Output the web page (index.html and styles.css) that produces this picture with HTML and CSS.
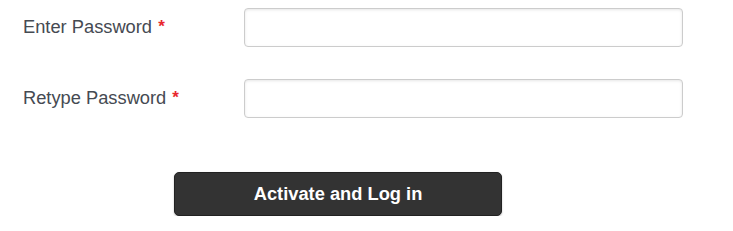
FILE: index.html
```html
<!DOCTYPE html>
<html lang="en">
<head>
    <meta charset="UTF-8">
    <meta name="viewport" content="width=device-width, initial-scale=1.0">
    <title>Activate account</title>
    <link rel="stylesheet" href="styles.css">
</head>
<body>

<form class="activate-form">
    <div class="form-row">
        <label class="form-label" for="password">Enter Password <span class="required">*</span></label>
        <input class="form-input" id="password" type="password">
    </div>

    <div class="form-row">
        <label class="form-label" for="password2">Retype Password <span class="required">*</span></label>
        <input class="form-input" id="password2" type="password">
    </div>

    <div class="form-actions">
        <button class="button" type="submit">Activate and Log in</button>
    </div>
</form>

</body>
</html>
```

FILE: styles.css
```css
/* Design général */
body {
    font-family: 'Liberation Sans', Arial, sans-serif;
    background: #fff;
    color: #444;
    margin: 0;
    padding: 0;
}

.activate-form {
    padding: 8px 0 0 23px;
}

.form-row {
    display: grid;
    grid-template-columns: 221px 439px;
    align-items: center;
    margin-bottom: 32px;
}

.form-label {
    font-size: 18.3px;
    color: #454a52;
    position: relative;
    top: -1px;
}

.required {
    color: #e8282f;
    font-size: 17px;
    font-weight: bold;
    position: relative;
    top: -1px;
    margin-left: 1px;
}

.form-input {
    box-sizing: border-box;
    height: 39px;
    width: 439px;
    border: 1px solid #ccc;
    border-radius: 4px;
    box-shadow: inset 0 1px 3px rgba(0, 0, 0, 0.1);
    font-size: 16px;
    padding: 6px 10px;
}

/* Design du bouton */
.form-actions {
    padding: 22px 0 0 151px;
}

.button {
    width: 328px;
    height: 44px;
    background-color: #333;
    color: #fff;
    font-family: 'Liberation Sans', Arial, sans-serif;
    font-size: 18.3px;
    font-weight: bold;
    border: 1px solid #222;
    border-radius: 5px;
    box-shadow: 0 1px 2px rgba(0, 0, 0, 0.25);
    cursor: pointer;
}
```
